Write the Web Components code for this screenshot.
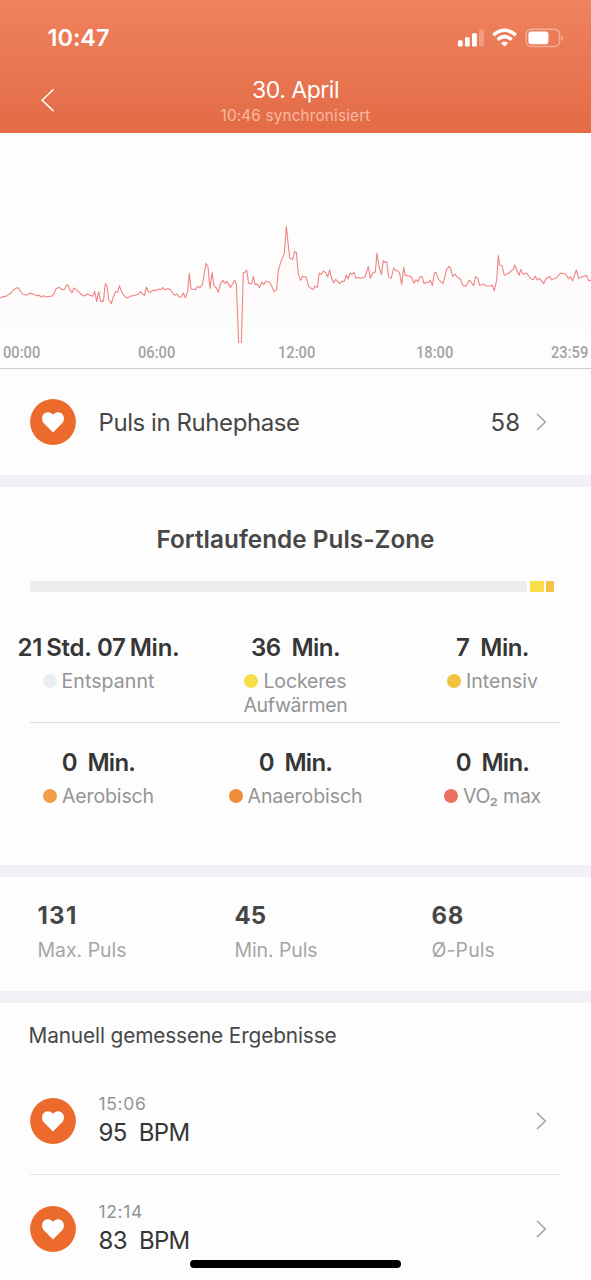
<!DOCTYPE html>
<html lang="de">
<head>
<meta charset="utf-8">
<title>Puls</title>
<style>
html,body{margin:0;padding:0;background:#fdfdfd}
body{width:591px;height:1280px;overflow:hidden;font-family:Inter,"Liberation Sans",sans-serif;color:#474747}
</style>
</head>
<body>
<pulse-app></pulse-app>
<script>
const define = (name, html, init) => {
  const tpl = document.createElement('template');
  tpl.innerHTML = html;
  customElements.define(name, class extends HTMLElement {
    connectedCallback() {
      if (this.shadowRoot) return;
      this.attachShadow({mode: 'open'}).append(tpl.content.cloneNode(true));
      if (init) init(this, this.shadowRoot);
    }
  });
};

// Text line whose tracking is adjusted so that it takes the given width.
define('fit-text', `<style>:host{display:block;white-space:pre;width:max-content}</style><slot></slot>`, el => {
  const w = parseFloat(el.getAttribute('w'));
  const natural = el.getBoundingClientRect().width;
  if (w && natural) el.style.letterSpacing = ((w - natural) / el.textContent.length).toFixed(3) + 'px';
});

define('chevron-right', `<style>:host{display:block;width:11px;height:18px}svg{display:block}</style>
<svg width="11" height="18" viewBox="0 0 11 18"><path d="M1 1 9.3 9 1 17" fill="none" stroke="#a0a0a0" stroke-width="1.5"/></svg>`);

define('heart-badge', `<style>:host{display:block;width:46px;height:46px;flex:none}svg{display:block}</style>
<svg width="46" height="46" viewBox="0 0 46 46"><circle cx="23" cy="23" r="22.9" fill="#eb6a2c"/><path d="M23 33.4 13.6 24C11.5 21.2 11.6 17 13.7 14.9 16.3 12.4 20.7 12.5 23 15.7 25.3 12.5 29.7 12.4 32.3 14.9 34.4 17 34.5 21.2 32.4 24Z" fill="#fff"/></svg>`);

define('status-bar', `<style>:host{display:flex;height:76px;align-items:center;justify-content:space-between;padding:0 27px 0 47.5px;box-sizing:border-box}
fit-text{font-size:23.5px;line-height:28px;font-weight:600}svg{display:block}</style>
<fit-text w="62">10:47</fit-text>
<svg width="107" height="20" viewBox="457 27.7 107 20" fill="#fff">
<rect x="458" y="40" width="4.6" height="6.2" rx="1.3"/><rect x="465" y="37" width="4.7" height="9.2" rx="1.3"/><rect x="472" y="33" width="4.9" height="13.2" rx="1.3"/><rect x="479" y="29" width="4.9" height="17.2" rx="1.3" opacity=".25"/>
<g fill="none" stroke="#fff" stroke-width="3.5"><path d="M493.4 34.8Q504.6 25 515.8 34.8"/><path d="M497.6 39.3Q504.6 33.3 511.6 39.3"/></g><path d="M501 42.7Q504.6 39.6 508.2 42.7L504.6 46.3Z"/>
<rect x="526.2" y="29" width="33.3" height="17.2" rx="5" fill="none" stroke="#fff" stroke-width="1.4" opacity=".38"/><rect x="528.4" y="31.2" width="20" height="12.8" rx="2.8"/><path d="M561.2 35v5.6q2-.7 2-2.8t-2-2.8" opacity=".4"/></svg>`);

define('nav-header', `<style>:host{display:grid;grid-template-columns:96px 1fr 96px;height:57px}
svg{display:block;margin:12px 0 0 40px}div{display:flex;flex-direction:column;align-items:center}
.t{font-size:23px;line-height:28px;color:#fff}.s{font-size:15.3px;line-height:22px;margin-top:1px;color:#f8b9a1}</style>
<svg width="16" height="25" viewBox="0 0 16 25"><path d="M13.6 1.3 2.2 12.2 13.6 23.1" fill="none" stroke="#fff" stroke-width="1.5"/></svg>
<div><fit-text class="t" w="87">30. April</fit-text><fit-text class="s" w="150">10:46 synchronisiert</fit-text></div>`);

define('pulse-chart', `<style>:host{display:flex;flex-direction:column;height:236px;box-sizing:border-box;border-bottom:1px solid #cfcfcf;padding-top:87px}
svg{display:block;width:591px;height:124px;flex:none}
.axis{display:grid;grid-template-columns:3px 135px 140px 138px 135px 1fr;font:500 16.5px/18px Roboto,sans-serif;color:#a2a2a2}
.axis span{transform:scaleX(.89);transform-origin:0 50%}</style>
<svg viewBox="0 0 1773 372"><defs><linearGradient id="f" x1="0" y1="0" x2="0" y2="1"><stop offset="0" stop-color="#fdf8f9"/><stop offset="1" stop-color="#fdfdfd"/></linearGradient></defs><path id="area" fill="url(#f)"/><path id="line" fill="none" stroke="#ee8582" stroke-width="3.3" stroke-linejoin="round"/></svg>
<div class="axis"><i></i><span>00:00</span><span>06:00</span><span>12:00</span><span>18:00</span><span>23:59</span></div>`, (el, root) => {
  const runs = [
    [0, '0,235 8,230 18,229 26,223 33,219 40,210 47,205 55,203 61,214 68,222 80,226 88,220 96,221 104,224 112,227 118,226 124,231 130,227 138,231 148,229 156,228 162,222 168,206 178,202 186,209 194,208 198,198 203,194 208,207 216,218 222,204 232,212 240,219 248,226 254,228 262,222 270,226 278,229 284,214 290,244 296,215 302,244 310,244 316,191 321,197 326,238 334,251 340,230 347,215 353,217 358,197 364,213 372,227 382,234 392,229 404,226 414,223 421,215 433,226 439,201 445,215 451,217 457,211 470,211 476,207 482,209 488,203 494,209 504,206 512,209 518,219 524,226 531,222 537,231 544,231 550,219 556,233 563,215 568,160 573,207 586,209'],
    [540, '53,199 60,203 67,194 78,130 84,141 90,205 96,158 102,197 109,204 115,217 121,193 128,181 134,190 140,184 152,202 164,181 169,193 176,369'],
    [540, '184,369 190,158 196,156 200,150 206,190 215,191 220,169 225,193 232,193 239,203 245,186 251,194 257,184 269,187 275,198 282,215 290,209 295,150 303,125 313,100 319,20 329,114 338,118 344,94 349,98 355,162 362,181 368,169 379,172 386,199 399,209 405,199 412,202 418,159 424,163 430,153 437,158 443,171 449,150 455,175 461,189 467,178 479,191 485,184 493,184 499,165 504,176 511,159 516,163 522,157 528,175 535,172 541,175 555,171 565,139 571,175 578,159 586,156 591,100 597,139'],
    [1140, '4,163 10,122 14,127 20,125 26,171 34,174 41,144 47,152 54,153 59,160 65,194 71,142 76,166 88,168 95,172 102,189 108,179 114,185 120,171 126,169 132,191 139,187 146,187 151,180 157,197 163,159 168,157 176,179 189,191 200,148 207,139 212,146 218,170 225,162 231,171 242,178 248,196 257,199 268,180 281,197 287,170 293,174 299,196 311,193 318,198 332,198 337,195 343,213 350,180 355,107 359,135 366,137 373,166 387,159 395,151 400,149 404,135 417,166 423,148 429,163 440,159 450,174 460,179 466,168 472,180 478,175 491,191 498,176 509,169 515,179 530,173 541,159 558,163 565,176 571,170 578,182 589,150 596,175 612,168 620,167 626,182 633,181']
  ];
  const pts = runs.flatMap(([dx, s]) => s.split(' ').map(p => { const [x, y] = p.split(',').map(Number); return [x + dx, y]; }));
  // The two samples at the floor mark a gap in the measurement.
  let d = '';
  pts.forEach(([x, y], i) => { d += (i === 0 || (y === 369 && pts[i - 1][1] === 369) ? 'M' : 'L') + x + ' ' + y; });
  root.getElementById('line').setAttribute('d', d);
  root.getElementById('area').setAttribute('d', 'M' + pts.map(p => p.join(' ')).join('L') + 'L1773 369L0 369Z');
});

define('resting-row', `<style>:host{display:flex;align-items:center;height:106px;padding:0 44px 0 30px;box-sizing:border-box;font-size:24px;line-height:28px}
.l{margin-left:22.5px;margin-right:auto}.v{margin-right:15.5px}fit-text{margin-top:1px}</style>
<heart-badge></heart-badge><fit-text class="l" w="201">Puls in Ruhephase</fit-text><fit-text class="v" w="30">58</fit-text><chevron-right></chevron-right>`);

define('section-gap', `<style>:host{display:block;height:12px;background:#f0f0f6}</style>`);

define('zone-item', `<style>:host{display:flex;flex-direction:column;align-items:center;text-align:center}
.v{font-size:24px;line-height:26px;font-weight:600;color:#363636;margin-bottom:8px}
.l{display:flex;justify-content:center;align-items:center;gap:5px;height:24px;font-size:19.5px;line-height:24px;color:#949494}
i{width:14px;height:14px;border-radius:50%;background:var(--dot)}::slotted(*){display:block}.l slot{display:block;padding-top:1px}</style>
<div class="v"><slot name="value"></slot></div><div class="l"><i></i><slot></slot></div><div class="l m"><slot name="more"></slot></div>`);

define('zone-panel', `<style>:host{display:block;height:378px;overflow:hidden}
.h{font-size:24.3px;line-height:28px;font-weight:600;margin:38px auto 0}
.bar{display:flex;gap:2.5px;height:10.5px;margin:28.3px 37px 0 30px}.bar b:nth-child(1){flex:1;background:#ecedee}.bar b:nth-child(2){width:14.2px;background:#f9dd49}.bar b:nth-child(3){width:7.8px;background:#f5c344}
.g{display:grid;grid-template-columns:repeat(3,197px)}.g.a{margin-top:43.2px;height:87px}
hr{border:0;height:1px;background:#dedede;margin:0 30px 27px}
.n{margin-left:4px}</style>
<fit-text class="h" w="278">Fortlaufende Puls-Zone</fit-text>
<div class="bar"><b></b><b></b><b></b></div>
<div class="g a">
<zone-item style="--dot:#ecedee"><fit-text slot="value" w="162">21<span class="n">Std. 07</span><span class="n">Min.</span></fit-text><fit-text w="93">Entspannt</fit-text></zone-item>
<zone-item style="--dot:#f9dd49"><fit-text slot="value" w="89">36  Min.</fit-text><fit-text w="83">Lockeres</fit-text><fit-text slot="more" w="104">Aufwärmen</fit-text></zone-item>
<zone-item style="--dot:#f3c242"><fit-text slot="value" w="73">7  Min.</fit-text><fit-text w="72">Intensiv</fit-text></zone-item></div>
<hr>
<div class="g">
<zone-item style="--dot:#f19f45"><fit-text slot="value" w="73.5">0  Min.</fit-text><fit-text w="92">Aerobisch</fit-text></zone-item>
<zone-item style="--dot:#ee8d37"><fit-text slot="value" w="73.5">0  Min.</fit-text><fit-text w="115">Anaerobisch</fit-text></zone-item>
<zone-item style="--dot:#eb6f5e"><fit-text slot="value" w="73.5">0  Min.</fit-text><fit-text w="78">VO₂ max</fit-text></zone-item></div>`);

define('stat-item', `<style>:host{display:block;padding-left:37.5px}.v{font-size:24px;line-height:28px;font-weight:700}.l{font-size:19.5px;line-height:24px;color:#a6a6a6;margin-top:8px}</style>
<div class="v"><slot name="value"></slot></div><div class="l"><slot></slot></div>`);

define('stats-panel', `<style>:host{display:grid;grid-template-columns:repeat(3,197px);height:114px;padding-top:25px;box-sizing:border-box}</style>
<stat-item><fit-text slot="value" w="40">131</fit-text><fit-text w="89">Max. Puls</fit-text></stat-item>
<stat-item><fit-text slot="value" w="31.5">45</fit-text><fit-text w="83">Min. Puls</fit-text></stat-item>
<stat-item><fit-text slot="value" w="32.5">68</fit-text><fit-text w="63.5">Ø-Puls</fit-text></stat-item>`);

define('result-row', `<style>:host{display:flex;align-items:center;height:107px;margin:0 30px;padding-right:14px;box-sizing:border-box}
.c{margin:-1px auto 0 22.5px}.t{font-size:17.5px;line-height:22px;color:#949494;height:22px}.v{font-size:24px;line-height:28px;color:#363636;margin-top:4px}</style>
<heart-badge></heart-badge><div class="c"><div class="t"><slot name="time"></slot></div><div class="v"><slot></slot></div></div><chevron-right></chevron-right>`);

define('results-panel', `<style>:host{display:block;height:277px;overflow:hidden}
.h{font-size:20.8px;line-height:26px;margin:20px 0 0 28.5px}hr{border:0;height:1px;background:#e6e6e6;margin:0 30px}.first{margin-top:18px}</style>
<fit-text class="h" w="308">Manuell gemessene Ergebnisse</fit-text>
<result-row class="first"><fit-text slot="time" w="48">15:06</fit-text><fit-text w="91">95  BPM</fit-text></result-row>
<hr>
<result-row><fit-text slot="time" w="44.5">12:14</fit-text><fit-text w="91">83  BPM</fit-text></result-row>`);

define('home-indicator', `<style>:host{position:absolute;left:190px;bottom:12px;width:211px;height:8px;border-radius:4px;background:#000}</style>`);

define('pulse-app', `<style>:host{display:block;position:relative;width:591px;height:1280px;overflow:hidden;background:#fdfdfd}
header{height:133px;background:linear-gradient(#ef825f,#e36b46);color:#fff}</style>
<header><status-bar></status-bar><nav-header></nav-header></header>
<pulse-chart></pulse-chart><resting-row></resting-row><section-gap></section-gap>
<zone-panel></zone-panel><section-gap></section-gap><stats-panel></stats-panel><section-gap></section-gap>
<results-panel></results-panel><home-indicator></home-indicator>`);
</script>
</body>
</html>
